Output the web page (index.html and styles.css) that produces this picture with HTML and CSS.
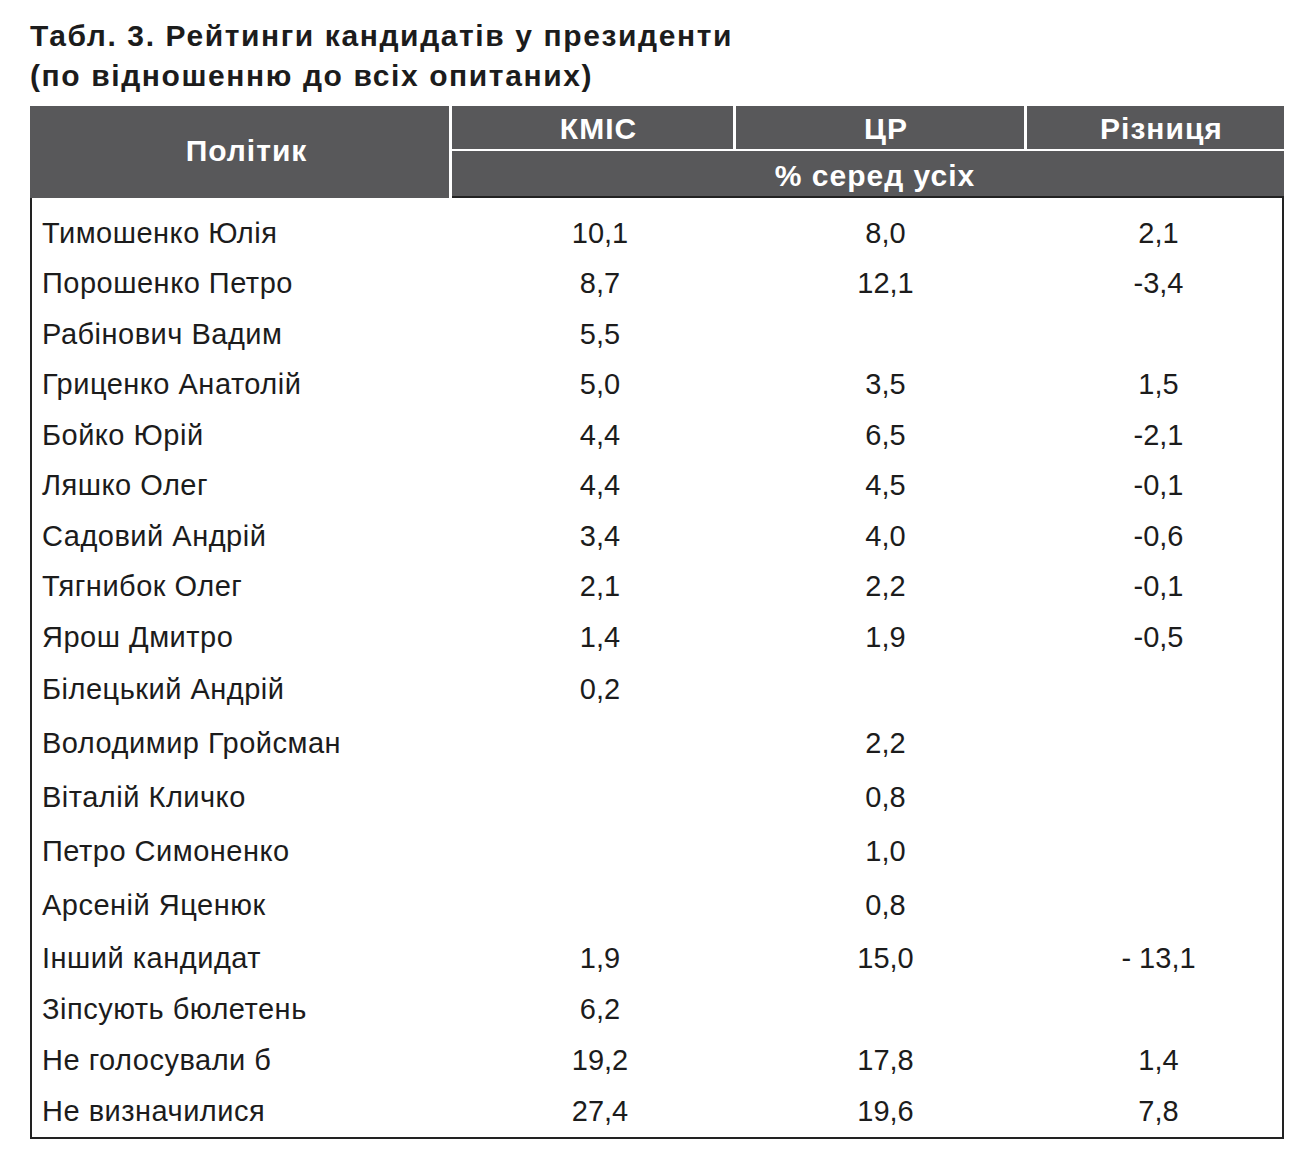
FILE: index.html
```html
<!DOCTYPE html>
<html lang="uk">
<head>
<meta charset="utf-8">
<title>Табл. 3. Рейтинги кандидатів у президенти</title>
<link rel="stylesheet" href="styles.css">
</head>
<body>
<div class="page">
  <h1 class="title">Табл. 3. Рейтинги кандидатів у президенти<br>(по відношенню до всіх опитаних)</h1>
  <div class="table">
    <div class="head">
      <div class="hc h-name">Політик</div>
      <div class="hc h-a">КМІС</div>
      <div class="hc h-b">ЦР</div>
      <div class="hc h-c">Різниця</div>
      <div class="hc h-sub">% серед усіх</div>
    </div>
    <div class="body">
      <div class="row"><span class="name">Тимошенко Юлія</span><span class="num">10,1</span><span class="num">8,0</span><span class="num">2,1</span></div>
      <div class="row"><span class="name">Порошенко Петро</span><span class="num">8,7</span><span class="num">12,1</span><span class="num">-3,4</span></div>
      <div class="row"><span class="name">Рабінович Вадим</span><span class="num">5,5</span><span class="num"></span><span class="num"></span></div>
      <div class="row"><span class="name">Гриценко Анатолій</span><span class="num">5,0</span><span class="num">3,5</span><span class="num">1,5</span></div>
      <div class="row"><span class="name">Бойко Юрій</span><span class="num">4,4</span><span class="num">6,5</span><span class="num">-2,1</span></div>
      <div class="row"><span class="name">Ляшко Олег</span><span class="num">4,4</span><span class="num">4,5</span><span class="num">-0,1</span></div>
      <div class="row"><span class="name">Садовий Андрій</span><span class="num">3,4</span><span class="num">4,0</span><span class="num">-0,6</span></div>
      <div class="row"><span class="name">Тягнибок Олег</span><span class="num">2,1</span><span class="num">2,2</span><span class="num">-0,1</span></div>
      <div class="row"><span class="name">Ярош Дмитро</span><span class="num">1,4</span><span class="num">1,9</span><span class="num">-0,5</span></div>
      <div class="row wide"><span class="name">Білецький Андрій</span><span class="num">0,2</span><span class="num"></span><span class="num"></span></div>
      <div class="row wide"><span class="name">Володимир Гройсман</span><span class="num"></span><span class="num">2,2</span><span class="num"></span></div>
      <div class="row wide"><span class="name">Віталій Кличко</span><span class="num"></span><span class="num">0,8</span><span class="num"></span></div>
      <div class="row wide"><span class="name">Петро Симоненко</span><span class="num"></span><span class="num">1,0</span><span class="num"></span></div>
      <div class="row wide"><span class="name">Арсеній Яценюк</span><span class="num"></span><span class="num">0,8</span><span class="num"></span></div>
      <div class="row mid"><span class="name">Інший кандидат</span><span class="num">1,9</span><span class="num">15,0</span><span class="num">- 13,1</span></div>
      <div class="row mid"><span class="name">Зіпсують бюлетень</span><span class="num">6,2</span><span class="num"></span><span class="num"></span></div>
      <div class="row mid"><span class="name">Не голосували б</span><span class="num">19,2</span><span class="num">17,8</span><span class="num">1,4</span></div>
      <div class="row mid"><span class="name">Не визначилися</span><span class="num">27,4</span><span class="num">19,6</span><span class="num">7,8</span></div>
    </div>
  </div>
</div>
</body>
</html>
```

FILE: styles.css
```css
html, body {
  margin: 0;
  padding: 0;
  background: #ffffff;
}

.page {
  width: 1254px;
  padding: 16px 0 0 30px;
  font-family: "Liberation Sans", Arial, sans-serif;
  color: #1c1c1c;
}

.title {
  margin: 0 0 10px 0;
  font-size: 30px;
  line-height: 40px;
  letter-spacing: 1.6px;
  font-weight: bold;
  color: #1c1c1c;
}

.table {
  width: 1254px;
}

.head {
  display: grid;
  grid-template-columns: 419px 281px 288px 257px;
  grid-template-rows: 43px 47px;
  column-gap: 3px;
  row-gap: 2px;
  width: 1254px;
}

.hc {
  background: #58585a;
  color: #ffffff;
  font-weight: bold;
  font-size: 30px;
  letter-spacing: 1px;
  display: flex;
  align-items: center;
  justify-content: center;
}

.h-name {
  grid-row: 1 / 3;
  padding-left: 14px;
  padding-bottom: 2px;
}

.h-a, .h-b, .h-c {
  padding-left: 12px;
  padding-top: 2px;
}

.h-sub {
  grid-column: 2 / 5;
  border-bottom: 2px solid #222222;
  padding-left: 14px;
  padding-top: 4px;
}

.body {
  border: 2px solid #222222;
  border-top: none;
  margin-top: 0;
  padding-top: 10px;
  width: 1250px;
}

.row {
  display: grid;
  grid-template-columns: 420px 282px 289px 257px;
  height: 50.5px;
  align-items: center;
  font-size: 29px;
  letter-spacing: 0.5px;
}

.row.wide {
  height: 54px;
}

.row.mid {
  height: 51px;
}

.name {
  padding-left: 10px;
  white-space: nowrap;
}

.num {
  text-align: center;
  padding-left: 14px;
  letter-spacing: 0;
}
```
